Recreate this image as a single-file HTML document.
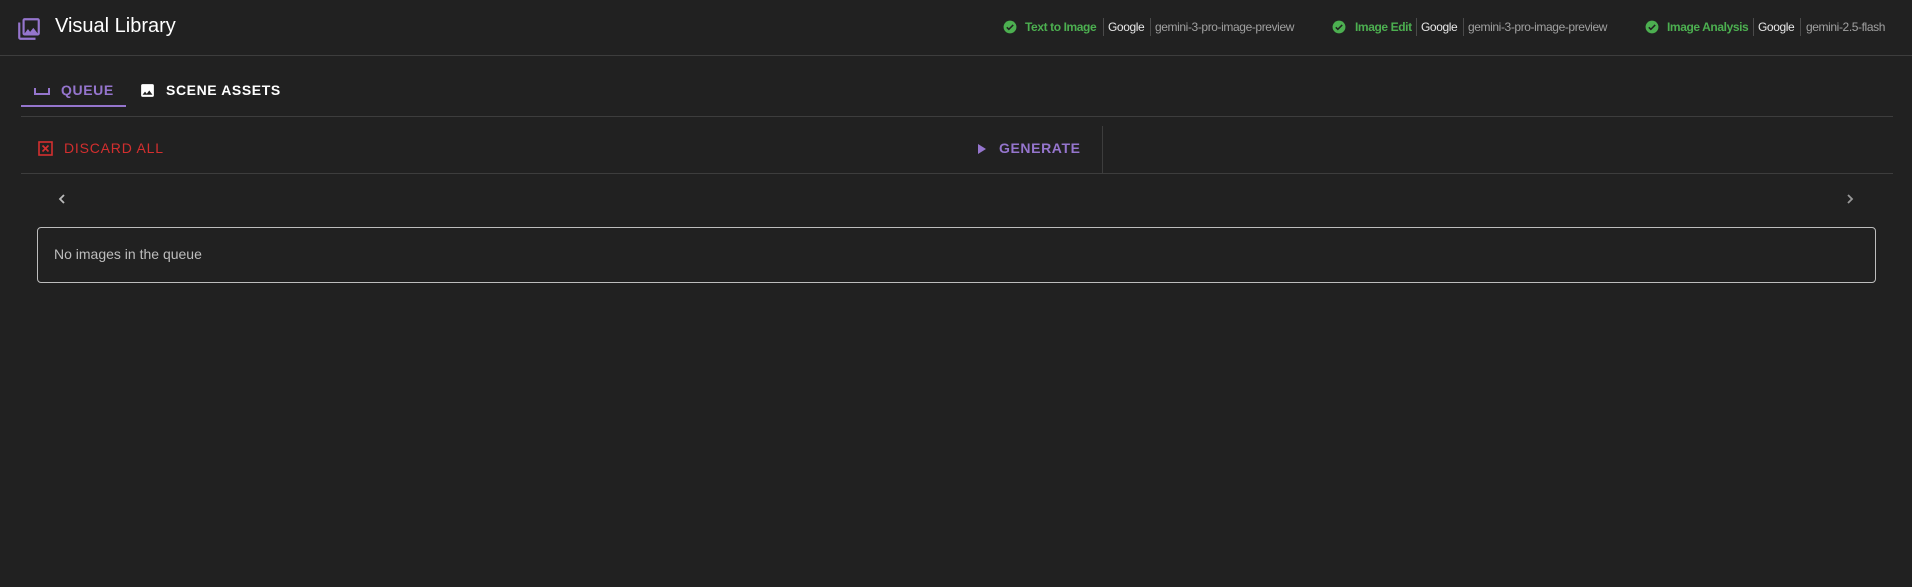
<!DOCTYPE html>
<html><head><style>
body{margin:0;width:1912px;height:587px;background:#212121;font-family:"Liberation Sans",Roboto,sans-serif;position:relative;overflow:hidden;color:#fff}
.a{position:absolute;white-space:nowrap}
.hl{position:absolute;background:#3d3d3d;height:1px}
.st{font-size:12px;top:19px;line-height:16px;letter-spacing:-0.4px}
.g{color:#4caf50;font-weight:bold}
.w{color:#e8e8e8}
.m{color:#a0a0a0}
.sep{position:absolute;top:18px;width:1px;height:18px;background:#4a4a4a}
.tab{font-size:14px;font-weight:bold;letter-spacing:0.6px;top:82px}
</style></head><body>
<svg class="a" style="left:16px;top:16px" width="26" height="26" viewBox="0 0 24 24"><path fill="#9575cd" d="M22 16V4c0-1.1-.9-2-2-2H8c-1.1 0-2 .9-2 2v12c0 1.1.9 2 2 2h12c1.1 0 2-.9 2-2zm-11-4l2.03 2.71L16 11l4 5H8l3-4zM2 6v14c0 1.1.9 2 2 2h14v-2H4V6H2zM8 4h12v12H8z"/></svg>
<div class="a" style="left:55px;top:15px;font-size:20px;color:#fff">Visual Library</div>
<div class="hl" style="left:0;top:55px;width:1912px"></div>

<svg class="a" style="left:1003px;top:20px" width="14" height="14" viewBox="0 0 24 24"><circle cx="12" cy="12" r="11" fill="#4caf50"/><path d="M6.5 12.5l3.5 3.5 7.5-7.5" stroke="#212121" stroke-width="2.6" fill="none"/></svg>
<div class="a st g" style="left:1025px">Text to Image</div><div class="sep" style="left:1103px"></div>
<div class="a st w" style="left:1108px">Google</div><div class="sep" style="left:1150px"></div>
<div class="a st m" style="left:1155px">gemini-3-pro-image-preview</div>

<svg class="a" style="left:1332px;top:20px" width="14" height="14" viewBox="0 0 24 24"><circle cx="12" cy="12" r="11" fill="#4caf50"/><path d="M6.5 12.5l3.5 3.5 7.5-7.5" stroke="#212121" stroke-width="2.6" fill="none"/></svg>
<div class="a st g" style="left:1355px">Image Edit</div><div class="sep" style="left:1416px"></div>
<div class="a st w" style="left:1421px">Google</div><div class="sep" style="left:1463px"></div>
<div class="a st m" style="left:1468px">gemini-3-pro-image-preview</div>

<svg class="a" style="left:1645px;top:20px" width="14" height="14" viewBox="0 0 24 24"><circle cx="12" cy="12" r="11" fill="#4caf50"/><path d="M6.5 12.5l3.5 3.5 7.5-7.5" stroke="#212121" stroke-width="2.6" fill="none"/></svg>
<div class="a st g" style="left:1667px">Image Analysis</div><div class="sep" style="left:1753px"></div>
<div class="a st w" style="left:1758px">Google</div><div class="sep" style="left:1800px"></div>
<div class="a st m" style="left:1806px">gemini-2.5-flash</div>

<svg class="a" style="left:33px;top:86px" width="18" height="10" viewBox="0 0 18 10"><path d="M2 2v6h14V2" stroke="#9575cd" stroke-width="2" fill="none"/></svg>
<div class="a tab" style="left:61px;color:#9575cd">QUEUE</div>
<svg class="a" style="left:139px;top:82px" width="17" height="17" viewBox="0 0 24 24"><path fill="#fff" d="M21 19V5c0-1.1-.9-2-2-2H5c-1.1 0-2 .9-2 2v14c0 1.1.9 2 2 2h14c1.1 0 2-.9 2-2zM8.5 13.5l2.5 3 3.5-4.5 4.5 6H5l3.5-4.5z"/></svg>
<div class="a tab" style="left:166px;color:#fff">SCENE ASSETS</div>
<div class="a" style="left:21px;top:105px;width:105px;height:2px;background:#9575cd"></div>
<div class="hl" style="left:21px;top:116px;width:1872px"></div>

<svg class="a" style="left:38px;top:141px" width="15" height="15" viewBox="0 0 15 15"><rect x="1" y="1" width="13" height="13" fill="none" stroke="#d32f2f" stroke-width="1.6"/><path d="M4.5 4.5l6 6M10.5 4.5l-6 6" stroke="#d32f2f" stroke-width="1.6"/></svg>
<div class="a" style="left:64px;top:140px;font-size:14px;letter-spacing:0.8px;color:#d32f2f;font-weight:500">DISCARD ALL</div>
<svg class="a" style="left:977px;top:143px" width="10" height="12" viewBox="0 0 10 12"><path d="M1 1l8 5-8 5z" fill="#9575cd"/></svg>
<div class="a" style="left:999px;top:140px;font-size:14px;letter-spacing:0.6px;color:#9575cd;font-weight:bold">GENERATE</div>
<div class="a" style="left:1102px;top:126px;width:1px;height:47px;background:#3d3d3d"></div>
<div class="hl" style="left:21px;top:173px;width:1872px"></div>

<svg class="a" style="left:56px;top:193px" width="12" height="12" viewBox="0 0 12 12"><path d="M8 2L4 6l4 4" stroke="#bbb" stroke-width="1.8" fill="none"/></svg>
<svg class="a" style="left:1844px;top:193px" width="12" height="12" viewBox="0 0 12 12"><path d="M4 2l4 4-4 4" stroke="#999" stroke-width="1.8" fill="none"/></svg>

<div class="a" style="left:37px;top:227px;width:1837px;height:54px;border:1px solid #bdbdbd;border-radius:4px"></div>
<div class="a" style="left:54px;top:246px;font-size:14px;color:#bdbdbd">No images in the queue</div>
</body></html>
